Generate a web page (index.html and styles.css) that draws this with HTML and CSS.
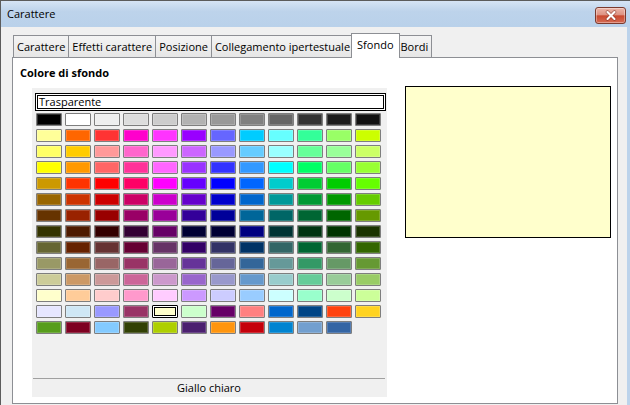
FILE: index.html
```html
<!DOCTYPE html>
<html lang="it">
<head>
<meta charset="utf-8">
<title>Carattere</title>
<link rel="stylesheet" href="styles.css">
</head>
<body>
<div class="window">
  <div class="titlebar">
    <span class="title">Carattere</span>
    <div class="close">
      <svg width="14" height="11" viewBox="0 0 14 11">
        <path d="M3.5 2 L10.5 9 M10.5 2 L3.5 9" stroke="#7a2f22" stroke-width="3.6" stroke-linecap="round" opacity="0.55"/>
        <path d="M3.5 2 L10.5 9 M10.5 2 L3.5 9" stroke="#ffffff" stroke-width="2.1" stroke-linecap="round"/>
      </svg>
    </div>
  </div>
  <div class="body">
    <div class="tabs">
      <div class="tab">Carattere</div>
      <div class="tab">Effetti carattere</div>
      <div class="tab">Posizione</div>
      <div class="tab">Collegamento ipertestuale</div>
      <div class="tab active">Sfondo</div>
      <div class="tab">Bordi</div>
    </div>
    <div class="panel">
      <div class="heading">Colore di sfondo</div>
      <div class="content">
        <div class="colorbox">
          <div class="none-field">Trasparente</div>
          <div class="swatches">
            <div class="sw" style="background:#000000"></div><div class="sw" style="background:#ffffff"></div><div class="sw" style="background:#eeeeee"></div><div class="sw" style="background:#dddddd"></div><div class="sw" style="background:#cccccc"></div><div class="sw" style="background:#b2b2b2"></div><div class="sw" style="background:#999999"></div><div class="sw" style="background:#808080"></div><div class="sw" style="background:#666666"></div><div class="sw" style="background:#333333"></div><div class="sw" style="background:#1c1c1c"></div><div class="sw" style="background:#111111"></div>
            <div class="sw" style="background:#ffff99"></div><div class="sw" style="background:#ff6600"></div><div class="sw" style="background:#ff3333"></div><div class="sw" style="background:#ff00cc"></div><div class="sw" style="background:#ff33ff"></div><div class="sw" style="background:#9900ff"></div><div class="sw" style="background:#6666ff"></div><div class="sw" style="background:#00ccff"></div><div class="sw" style="background:#66ffff"></div><div class="sw" style="background:#33ff99"></div><div class="sw" style="background:#99ff66"></div><div class="sw" style="background:#ccff00"></div>
            <div class="sw" style="background:#ffff66"></div><div class="sw" style="background:#ffcc00"></div><div class="sw" style="background:#ff9999"></div><div class="sw" style="background:#ff66cc"></div><div class="sw" style="background:#ff99ff"></div><div class="sw" style="background:#cc66ff"></div><div class="sw" style="background:#9999ff"></div><div class="sw" style="background:#66ccff"></div><div class="sw" style="background:#99ffff"></div><div class="sw" style="background:#66ff99"></div><div class="sw" style="background:#99ff99"></div><div class="sw" style="background:#ccff66"></div>
            <div class="sw" style="background:#ffff00"></div><div class="sw" style="background:#ff9900"></div><div class="sw" style="background:#ff6666"></div><div class="sw" style="background:#ff3399"></div><div class="sw" style="background:#ff66ff"></div><div class="sw" style="background:#9933ff"></div><div class="sw" style="background:#3333ff"></div><div class="sw" style="background:#3399ff"></div><div class="sw" style="background:#00ffff"></div><div class="sw" style="background:#00ff66"></div><div class="sw" style="background:#66ff66"></div><div class="sw" style="background:#99ff33"></div>
            <div class="sw" style="background:#cc9900"></div><div class="sw" style="background:#ff3300"></div><div class="sw" style="background:#ff0000"></div><div class="sw" style="background:#ff0066"></div><div class="sw" style="background:#ff00ff"></div><div class="sw" style="background:#6600ff"></div><div class="sw" style="background:#0000ff"></div><div class="sw" style="background:#0066ff"></div><div class="sw" style="background:#00cccc"></div><div class="sw" style="background:#00cc33"></div><div class="sw" style="background:#00cc00"></div><div class="sw" style="background:#66ff00"></div>
            <div class="sw" style="background:#996600"></div><div class="sw" style="background:#cc3300"></div><div class="sw" style="background:#cc0000"></div><div class="sw" style="background:#cc0066"></div><div class="sw" style="background:#cc00cc"></div><div class="sw" style="background:#6600cc"></div><div class="sw" style="background:#0000cc"></div><div class="sw" style="background:#0066cc"></div><div class="sw" style="background:#009999"></div><div class="sw" style="background:#009933"></div><div class="sw" style="background:#009900"></div><div class="sw" style="background:#66cc00"></div>
            <div class="sw" style="background:#663300"></div><div class="sw" style="background:#992200"></div><div class="sw" style="background:#990000"></div><div class="sw" style="background:#990066"></div><div class="sw" style="background:#990099"></div><div class="sw" style="background:#330099"></div><div class="sw" style="background:#000099"></div><div class="sw" style="background:#006699"></div><div class="sw" style="background:#006666"></div><div class="sw" style="background:#006633"></div><div class="sw" style="background:#006600"></div><div class="sw" style="background:#669900"></div>
            <div class="sw" style="background:#333300"></div><div class="sw" style="background:#4d1a00"></div><div class="sw" style="background:#330000"></div><div class="sw" style="background:#330033"></div><div class="sw" style="background:#660066"></div><div class="sw" style="background:#000033"></div><div class="sw" style="background:#000033"></div><div class="sw" style="background:#000080"></div><div class="sw" style="background:#003333"></div><div class="sw" style="background:#003311"></div><div class="sw" style="background:#003300"></div><div class="sw" style="background:#1a3300"></div>
            <div class="sw" style="background:#666633"></div><div class="sw" style="background:#662200"></div><div class="sw" style="background:#663333"></div><div class="sw" style="background:#660033"></div><div class="sw" style="background:#663366"></div><div class="sw" style="background:#330066"></div><div class="sw" style="background:#333366"></div><div class="sw" style="background:#003366"></div><div class="sw" style="background:#336666"></div><div class="sw" style="background:#006633"></div><div class="sw" style="background:#336633"></div><div class="sw" style="background:#336600"></div>
            <div class="sw" style="background:#999966"></div><div class="sw" style="background:#996633"></div><div class="sw" style="background:#996666"></div><div class="sw" style="background:#993366"></div><div class="sw" style="background:#996699"></div><div class="sw" style="background:#663399"></div><div class="sw" style="background:#666699"></div><div class="sw" style="background:#336699"></div><div class="sw" style="background:#669999"></div><div class="sw" style="background:#339966"></div><div class="sw" style="background:#669966"></div><div class="sw" style="background:#669933"></div>
            <div class="sw" style="background:#cccc99"></div><div class="sw" style="background:#cc9966"></div><div class="sw" style="background:#cc9999"></div><div class="sw" style="background:#cc6699"></div><div class="sw" style="background:#cc99cc"></div><div class="sw" style="background:#9966cc"></div><div class="sw" style="background:#9999cc"></div><div class="sw" style="background:#6699cc"></div><div class="sw" style="background:#99cccc"></div><div class="sw" style="background:#66cc99"></div><div class="sw" style="background:#99cc99"></div><div class="sw" style="background:#99cc66"></div>
            <div class="sw" style="background:#ffffcc"></div><div class="sw" style="background:#ffcc99"></div><div class="sw" style="background:#ffcccc"></div><div class="sw" style="background:#ff99cc"></div><div class="sw" style="background:#ffccff"></div><div class="sw" style="background:#cc99ff"></div><div class="sw" style="background:#ccccff"></div><div class="sw" style="background:#99ccff"></div><div class="sw" style="background:#ccffff"></div><div class="sw" style="background:#99ffcc"></div><div class="sw" style="background:#ccffcc"></div><div class="sw" style="background:#ccff99"></div>
            <div class="sw" style="background:#e6e6ff"></div><div class="sw" style="background:#cfe7f5"></div><div class="sw" style="background:#9999ff"></div><div class="sw" style="background:#993366"></div><div class="sw selected" style="background:#ffffcc"></div><div class="sw" style="background:#ccffcc"></div><div class="sw" style="background:#660066"></div><div class="sw" style="background:#ff8080"></div><div class="sw" style="background:#0066cc"></div><div class="sw" style="background:#004586"></div><div class="sw" style="background:#ff420e"></div><div class="sw" style="background:#ffd320"></div>
            <div class="sw" style="background:#579d1c"></div><div class="sw" style="background:#7e0021"></div><div class="sw" style="background:#83caff"></div><div class="sw" style="background:#314004"></div><div class="sw" style="background:#aecf00"></div><div class="sw" style="background:#4b1f6f"></div><div class="sw" style="background:#ff950e"></div><div class="sw" style="background:#c5000b"></div><div class="sw" style="background:#0084d1"></div><div class="sw" style="background:#729fcf"></div><div class="sw" style="background:#3465a4"></div>
          </div>
          <div class="status">Giallo chiaro</div>
        </div>
        <div class="preview"></div>
      </div>
    </div>
  </div>
</div>
</body>
</html>
```
FILE: styles.css
```css
* { box-sizing: border-box; }
html, body { margin: 0; padding: 0; }
body {
  width: 630px;
  height: 405px;
  overflow: hidden;
  background: #f0f0f0;
  font-family: "Open Sans", "Noto Sans", "Liberation Sans", sans-serif;
  font-size: 11px;
  color: #000;
}
.window {
  width: 630px;
  height: 405px;
  display: flex;
  flex-direction: column;
  border-left: 1px solid #5c5c5c;
  border-top: 1px solid #5c5c5c;
  background: #bcd3eb;
}
.titlebar {
  height: 26px;
  flex: none;
  display: flex;
  align-items: center;
  justify-content: space-between;
  padding: 0 4px 0 6px;
  background: linear-gradient(#d6e4f5, #bdd3eb 40%, #b9d1ea);
}
.title { font-size: 11px; line-height: 16px; }
.close {
  width: 31px;
  height: 17px;
  margin-top: 2px;
  border: 1px solid #7b3a2e;
  border-radius: 3px;
  background: linear-gradient(#ecb5a8 0%, #dd9282 46%, #c9492f 52%, #d56b54 100%);
  box-shadow: inset 0 0 0 1px rgba(255,255,255,0.35);
  display: flex;
  align-items: center;
  justify-content: center;
}
.close svg { display: block; }
.body {
  flex: 1;
  margin-right: 3px;
  background: #f0f0f0;
  padding: 6px 0 0 11px;
}
.tabs {
  display: flex;
  align-items: flex-end;
  height: 25px;
  margin-bottom: -1px;
  position: relative;
  z-index: 1;
}
.tab {
  height: 22px;
  margin-bottom: 1px;
  margin-left: -1px;
  padding: 0 3px 1px;
  border: 1px solid #8d8f94;
  border-bottom: none;
  background: linear-gradient(#f4f4f4, #e6e6e6);
  display: flex;
  align-items: center;
  white-space: nowrap;
}
.tab:first-child { margin-left: 1px; }
.tab.active {
  height: 25px;
  margin-bottom: 0;
  margin-left: -3px;
  margin-right: -2px;
  padding: 0 5px 3px;
  background: #fff;
  position: relative;
  z-index: 2;
}
.panel {
  width: 606px;
  height: 347px;
  border: 1px solid #8d8f94;
  background: #fff;
  padding: 7px 0 0 7px;
}
.heading {
  font-weight: 700;
  line-height: 16px;
}
.content {
  display: flex;
  align-items: flex-start;
  margin-top: 5px;
  padding-left: 12px;
}
.colorbox {
  width: 355px;
  height: 309px;
  margin-top: 2px;
  background: #f0f0f0;
  display: flex;
  flex-direction: column;
  padding: 5px 0 0 3px;
}
.none-field {
  width: 351px;
  height: 18px;
  border: 1px solid #000;
  background: #fff;
  box-shadow: inset 0 0 0 1px #fff, inset 0 0 0 2px #000;
  padding: 0 3px;
  line-height: 15px;
}
.swatches {
  display: grid;
  grid-template-columns: repeat(12, 26px);
  grid-auto-rows: 13px;
  gap: 3px;
  margin: 2px 0 0 1px;
}
.sw {
  border: 1px solid #7e7e7e;
  border-radius: 1px;
  box-shadow: inset 0 0 0 1px rgba(255,255,255,0.18);
}
.sw.selected {
  border: 1px solid #000;
  box-shadow: inset 0 0 0 1px #fff, inset 0 0 0 2px #000;
}
.status {
  margin-top: auto;
  margin-left: -2px;
  width: 352px;
  height: 19px;
  border-top: 1px solid #a0a0a0;
  text-align: center;
  line-height: 18px;
}
.preview {
  width: 206px;
  height: 152px;
  margin-left: 18px;
  border: 1px solid #000;
  background: #ffffcc;
}
```
